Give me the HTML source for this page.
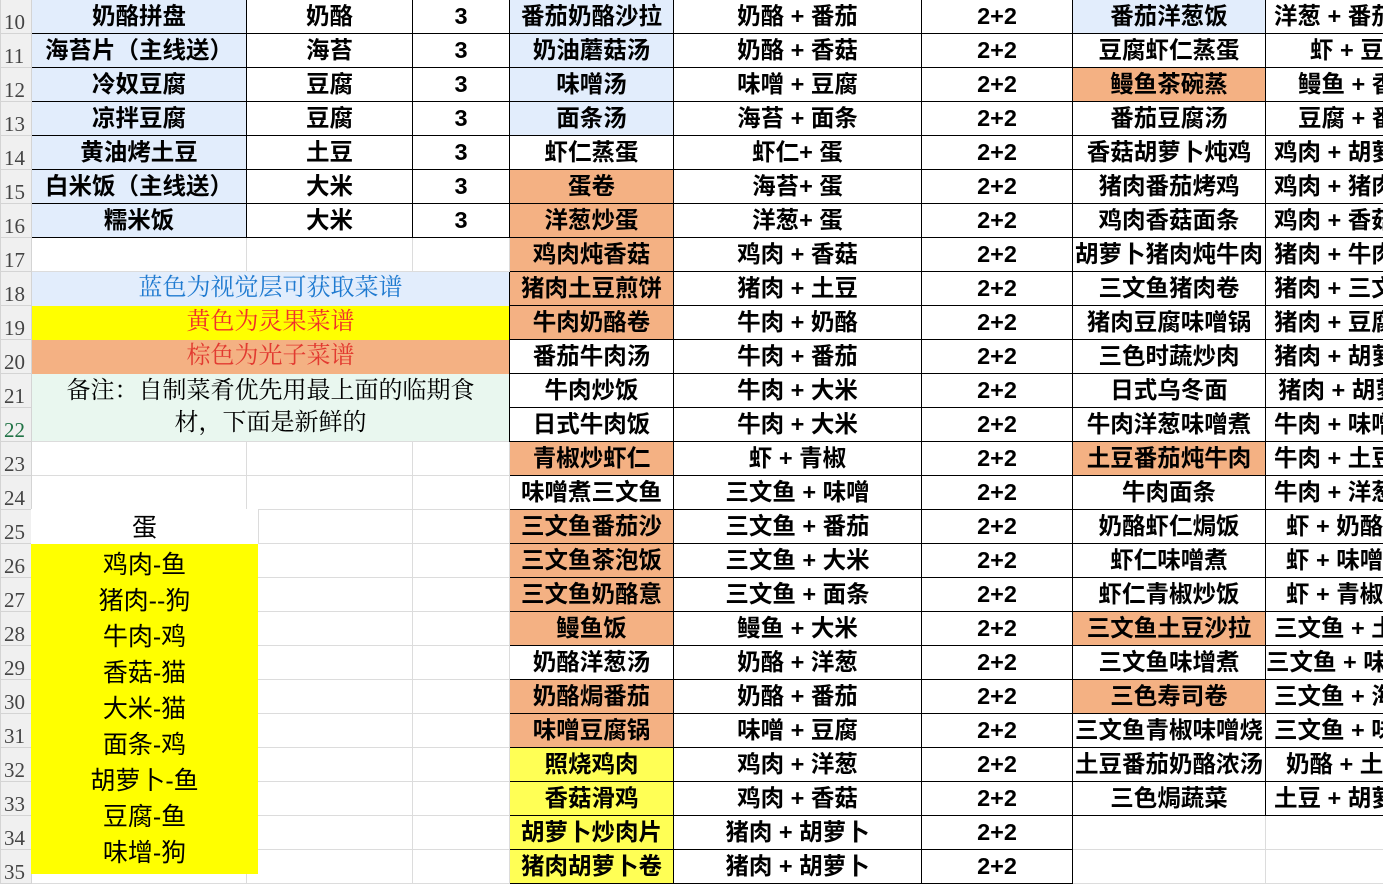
<!DOCTYPE html>
<html><head><meta charset="utf-8"><style>
html,body{margin:0;padding:0;width:1383px;height:868px;overflow:hidden;background:#fff}
table{border-collapse:collapse;table-layout:fixed;width:1383px;position:absolute;left:0;top:-1px}
tr{height:34px}
td{height:33px;padding:0;border:1px solid #dcdcdc;text-align:center;white-space:nowrap;overflow:hidden;font:bold 23.5px "Liberation Sans","Noto Sans CJK SC",sans-serif;color:#000;line-height:33px}
td.n{background:#f0f0f0;border-color:#d4d4d4;font:21px "Liberation Serif","Noto Serif CJK SC",serif;color:#444;text-align:left;vertical-align:bottom;line-height:22px;padding-left:3px}
td.b{border:1.5px solid #000}
.bl{background:#e2edfc}.or{background:#f4b183}.ye{background:#ffff55}.y2{background:#ffff00}
td.h{text-align:left;padding-left:8px}
td.lg{font:24px "Liberation Serif","Noto Serif CJK SC",serif;line-height:33px;border:none}
.egg{position:absolute;left:31px;width:227px;text-align:center;font:25px "Liberation Sans","Noto Sans CJK SC",sans-serif;color:#000}
</style></head><body>
<table>
<colgroup><col style="width:31px"><col style="width:215px"><col style="width:166px"><col style="width:97px"><col style="width:164px"><col style="width:248px"><col style="width:151px"><col style="width:193px"><col style="width:118px"></colgroup>
<tr><td class="n">10</td><td class="b bl">奶酪拼盘</td><td class="b">奶酪</td><td class="b">3</td><td class="b bl">番茄奶酪沙拉</td><td class="b">奶酪 + 番茄</td><td class="b">2+2</td><td class="b bl">番茄洋葱饭</td><td class="b h">洋葱 + 番茄</td></tr>
<tr><td class="n">11</td><td class="b bl">海苔片（主线送）</td><td class="b">海苔</td><td class="b">3</td><td class="b bl">奶油蘑菇汤</td><td class="b">奶酪 + 香菇</td><td class="b">2+2</td><td class="b">豆腐虾仁蒸蛋</td><td class="b h" style="padding-left:44px">虾 + 豆腐</td></tr>
<tr><td class="n">12</td><td class="b bl">冷奴豆腐</td><td class="b">豆腐</td><td class="b">3</td><td class="b bl">味噌汤</td><td class="b">味噌 + 豆腐</td><td class="b">2+2</td><td class="b or">鳗鱼茶碗蒸</td><td class="b h" style="padding-left:32px">鳗鱼 + 香菇</td></tr>
<tr><td class="n">13</td><td class="b bl">凉拌豆腐</td><td class="b">豆腐</td><td class="b">3</td><td class="b bl">面条汤</td><td class="b">海苔 + 面条</td><td class="b">2+2</td><td class="b">番茄豆腐汤</td><td class="b h" style="padding-left:32px">豆腐 + 番茄</td></tr>
<tr><td class="n">14</td><td class="b bl">黄油烤土豆</td><td class="b">土豆</td><td class="b">3</td><td class="b">虾仁蒸蛋</td><td class="b">虾仁+ 蛋</td><td class="b">2+2</td><td class="b">香菇胡萝卜炖鸡</td><td class="b h">鸡肉 + 胡萝卜</td></tr>
<tr><td class="n">15</td><td class="b bl">白米饭（主线送）</td><td class="b">大米</td><td class="b">3</td><td class="b or">蛋卷</td><td class="b">海苔+ 蛋</td><td class="b">2+2</td><td class="b">猪肉番茄烤鸡</td><td class="b h">鸡肉 + 猪肉</td></tr>
<tr><td class="n">16</td><td class="b bl">糯米饭</td><td class="b">大米</td><td class="b">3</td><td class="b or">洋葱炒蛋</td><td class="b">洋葱+ 蛋</td><td class="b">2+2</td><td class="b">鸡肉香菇面条</td><td class="b h">鸡肉 + 香菇</td></tr>
<tr><td class="n">17</td><td></td><td></td><td></td><td class="b or">鸡肉炖香菇</td><td class="b">鸡肉 + 香菇</td><td class="b">2+2</td><td class="b">胡萝卜猪肉炖牛肉</td><td class="b h">猪肉 + 牛肉</td></tr>
<tr><td class="n">18</td><td colspan="3" class="lg bl" style="color:#1f7ad0">蓝色为视觉层可获取菜谱</td><td class="b or">猪肉土豆煎饼</td><td class="b">猪肉 + 土豆</td><td class="b">2+2</td><td class="b">三文鱼猪肉卷</td><td class="b h">猪肉 + 三文鱼</td></tr>
<tr><td class="n">19</td><td colspan="3" class="lg y2" style="color:#f0302a">黄色为灵果菜谱</td><td class="b or">牛肉奶酪卷</td><td class="b">牛肉 + 奶酪</td><td class="b">2+2</td><td class="b">猪肉豆腐味噌锅</td><td class="b h">猪肉 + 豆腐</td></tr>
<tr><td class="n">20</td><td colspan="3" class="lg or" style="color:#e23a30">棕色为光子菜谱</td><td class="b">番茄牛肉汤</td><td class="b">牛肉 + 番茄</td><td class="b">2+2</td><td class="b">三色时蔬炒肉</td><td class="b h">猪肉 + 胡萝卜</td></tr>
<tr><td class="n">21</td><td colspan="3" rowspan="2" class="lg" style="background:#e9f7ef;line-height:32px">备注：自制菜肴优先用最上面的临期食<br>材，下面是新鲜的</td><td class="b">牛肉炒饭</td><td class="b">牛肉 + 大米</td><td class="b">2+2</td><td class="b">日式乌冬面</td><td class="b h" style="padding-left:12px">猪肉 + 胡萝卜</td></tr>
<tr><td class="n" style="color:#217346">22</td><td class="b">日式牛肉饭</td><td class="b">牛肉 + 大米</td><td class="b">2+2</td><td class="b">牛肉洋葱味噌煮</td><td class="b h">牛肉 + 味噌</td></tr>
<tr><td class="n">23</td><td></td><td></td><td></td><td class="b or">青椒炒虾仁</td><td class="b">虾 + 青椒</td><td class="b">2+2</td><td class="b or">土豆番茄炖牛肉</td><td class="b h">牛肉 + 土豆</td></tr>
<tr><td class="n">24</td><td></td><td></td><td></td><td class="b">味噌煮三文鱼</td><td class="b">三文鱼 + 味噌</td><td class="b">2+2</td><td class="b">牛肉面条</td><td class="b h">牛肉 + 洋葱</td></tr>
<tr><td class="n">25</td><td></td><td></td><td></td><td class="b or">三文鱼番茄沙</td><td class="b">三文鱼 + 番茄</td><td class="b">2+2</td><td class="b">奶酪虾仁焗饭</td><td class="b h" style="padding-left:20px">虾 + 奶酪</td></tr>
<tr><td class="n">26</td><td></td><td></td><td></td><td class="b or">三文鱼茶泡饭</td><td class="b">三文鱼 + 大米</td><td class="b">2+2</td><td class="b">虾仁味噌煮</td><td class="b h" style="padding-left:20px">虾 + 味噌</td></tr>
<tr><td class="n">27</td><td></td><td></td><td></td><td class="b or">三文鱼奶酪意</td><td class="b">三文鱼 + 面条</td><td class="b">2+2</td><td class="b">虾仁青椒炒饭</td><td class="b h" style="padding-left:20px">虾 + 青椒</td></tr>
<tr><td class="n">28</td><td></td><td></td><td></td><td class="b or">鳗鱼饭</td><td class="b">鳗鱼 + 大米</td><td class="b">2+2</td><td class="b or">三文鱼土豆沙拉</td><td class="b h">三文鱼 + 土豆</td></tr>
<tr><td class="n">29</td><td></td><td></td><td></td><td class="b">奶酪洋葱汤</td><td class="b">奶酪 + 洋葱</td><td class="b">2+2</td><td class="b">三文鱼味增煮</td><td class="b h" style="padding-left:0">三文鱼 + 味噌</td></tr>
<tr><td class="n">30</td><td></td><td></td><td></td><td class="b or">奶酪焗番茄</td><td class="b">奶酪 + 番茄</td><td class="b">2+2</td><td class="b or">三色寿司卷</td><td class="b h">三文鱼 + 海苔</td></tr>
<tr><td class="n">31</td><td></td><td></td><td></td><td class="b or">味噌豆腐锅</td><td class="b">味噌 + 豆腐</td><td class="b">2+2</td><td class="b">三文鱼青椒味噌烧</td><td class="b h">三文鱼 + 味噌</td></tr>
<tr><td class="n">32</td><td></td><td></td><td></td><td class="b ye">照烧鸡肉</td><td class="b">鸡肉 + 洋葱</td><td class="b">2+2</td><td class="b">土豆番茄奶酪浓汤</td><td class="b h" style="padding-left:20px">奶酪 + 土豆</td></tr>
<tr><td class="n">33</td><td></td><td></td><td></td><td class="b ye">香菇滑鸡</td><td class="b">鸡肉 + 香菇</td><td class="b">2+2</td><td class="b">三色焗蔬菜</td><td class="b h">土豆 + 胡萝卜</td></tr>
<tr><td class="n">34</td><td></td><td></td><td></td><td class="b ye">胡萝卜炒肉片</td><td class="b">猪肉 + 胡萝卜</td><td class="b">2+2</td><td></td><td></td></tr>
<tr><td class="n">35</td><td></td><td></td><td></td><td class="b ye">猪肉胡萝卜卷</td><td class="b">猪肉 + 胡萝卜</td><td class="b">2+2</td><td></td><td></td></tr>
</table>
<div class="egg" style="top:509px;height:35px;background:#fff;border-right:1px solid #dcdcdc;line-height:38px">蛋</div>
<div class="egg" style="top:544px;height:330px;background:#ff0;line-height:36px;padding-top:3px;box-sizing:border-box">鸡肉-鱼<br>猪肉--狗<br>牛肉-鸡<br>香菇-猫<br>大米-猫<br>面条-鸡<br>胡萝卜-鱼<br>豆腐-鱼<br>味增-狗</div>
</body></html>
